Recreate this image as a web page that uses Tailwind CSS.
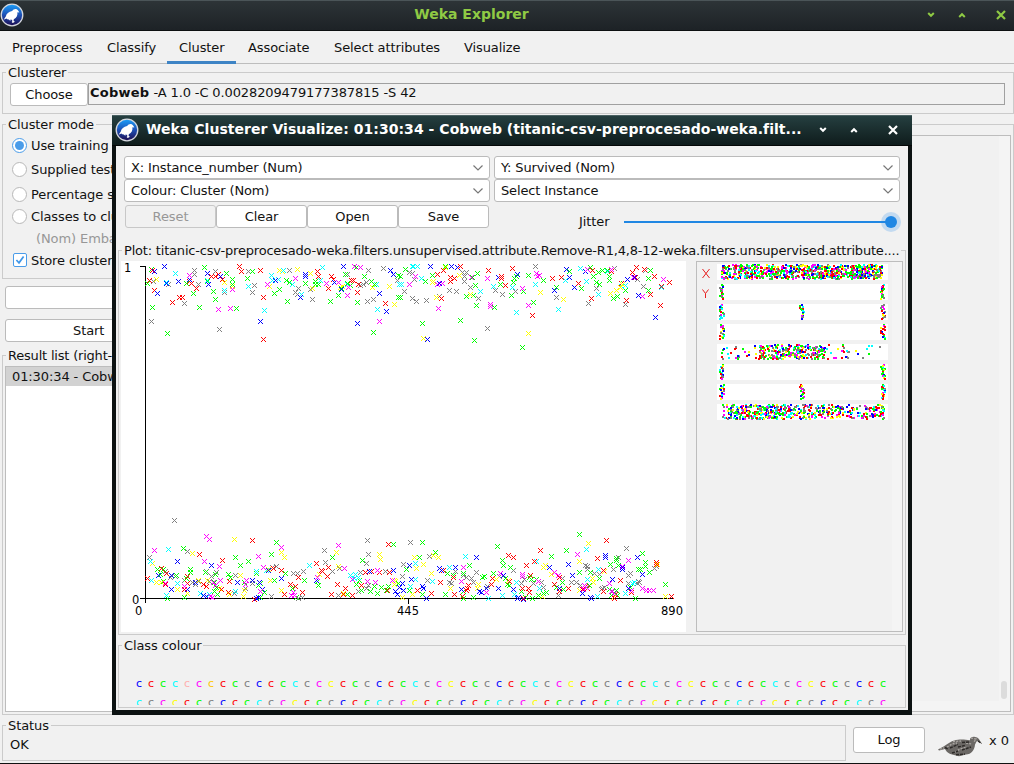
<!DOCTYPE html>
<html lang="en">
<head>
<meta charset="utf-8">
<title>Weka Explorer</title>
<script src="https://cdn.jsdelivr.net/npm/@tailwindcss/browser@4"></script>
</head>
<body class="w-[1014px] h-[764px] overflow-hidden bg-[#f1f1f1] font-['DejaVu_Sans',sans-serif] text-[13px] leading-4 tracking-[-0.1px] text-[#111] whitespace-nowrap">
<svg width="0" height="0" class="absolute">
  <defs>
    <linearGradient id="blue" x1="0" y1="0" x2="0" y2="1"><stop offset="0" stop-color="#1ba0fb"/><stop offset=".5" stop-color="#1d4fb4"/><stop offset="1" stop-color="#1c0b50"/></linearGradient>
    <symbol id="logo" viewBox="0 0 24 24">
      <circle cx="12" cy="12" r="10.8" fill="url(#blue)" stroke="#d5d8de" stroke-width="1.3"/>
      <path d="M3.6 16.8 L5.8 13.6 C6.3 10.6 8.8 8.8 12.1 8.1 C13.2 6.2 15.4 5.4 17 6.4 C18 7 18.7 8 19.3 9.5 L17.4 9.2 C17.8 12.4 16.6 15 13.8 16.2 L13.6 18 L15 18.8 L12.8 20 L11.6 18.9 L12.4 18.3 L12 16.7 L10 16.8 L10.8 18.2 L8.8 16.6 C7.6 16.4 6.8 16 6.4 15.5 Z" fill="#fff"/>
    </symbol>
    <symbol id="chev" viewBox="0 0 12 8"><path d="M1.5 1.5 L6 6 L10.5 1.5" fill="none" stroke="#777" stroke-width="1.2"/></symbol>
    <symbol id="down" viewBox="0 0 8 6"><path d="M1.2 1 L4 3.8 L6.8 1" fill="none" stroke="currentColor" stroke-width="2"/></symbol>
    <symbol id="up" viewBox="0 0 8 6"><path d="M1.2 5 L4 2.2 L6.8 5" fill="none" stroke="currentColor" stroke-width="2"/></symbol>
    <symbol id="close" viewBox="0 0 10 10"><path d="M1 1 L9 9 M9 1 L1 9" fill="none" stroke="currentColor" stroke-width="2.2"/></symbol>
  </defs>
</svg>

<div class="flex flex-col w-[1014px] h-[764px] border-b border-[#111]">
  <!-- main title bar -->
  <header class="h-[31px] shrink-0 flex items-center bg-gradient-to-b from-[#2d3437] to-[#1d2226] border-t border-t-[#4b5558] border-b border-b-[#0d1011] text-[#8fca44]">
    <svg class="w-6 h-6 shrink-0 -ml-[0.5px] -mt-px"><use href="#logo"/></svg>
    <h1 class="w-[896px] text-center font-bold text-[14px] tracking-normal -mt-[3px]">Weka Explorer</h1>
    <div class="flex items-center ml-[7px] -mt-px">
      <svg class="w-2 h-[6px]"><use href="#down"/></svg>
      <svg class="w-2 h-[6px] ml-[23px]"><use href="#up"/></svg>
      <svg class="w-[10px] h-[10px] ml-[30px]"><use href="#close"/></svg>
    </div>
  </header>

  <!-- tabs -->
  <nav class="h-[33px] shrink-0 flex border-b border-[#bdbdbd] pt-[9px]">
    <span class="w-[95px] pl-3 tracking-normal">Preprocess</span>
    <span class="w-[60px] pl-3">Classify</span>
    <span class="w-[12px]"></span>
    <span class="w-[69px] h-[24px] pl-3 border-b-[3px] border-[#3e84c5]">Cluster</span>
    <span class="w-[85px] pl-3">Associate</span>
    <span class="w-[132px] pl-[13px]">Select attributes</span>
    <span class="pl-[11px]">Visualize</span>
  </nav>

  <!-- clusterer -->
  <section class="mt-2 ml-[2px] h-[42px] shrink-0 border border-[#cbcbcb]">
    <div class="w-fit -mt-2 ml-[3px] px-[2px] h-4 bg-[#f1f1f1]">Clusterer</div>
    <div class="flex ml-[7px] mt-[2px] mr-2">
      <button class="w-[78px] h-[23px] border border-[#bbb] rounded-[3px] bg-white">Choose</button>
      <div class="flex-1 h-[22px] border border-[#a0a0a0] pl-[1px] pt-[1px]"><b class="tracking-[0.25px]">Cobweb</b><span class="tracking-[-0.12px]"> -A 1.0 -C 0.0028209479177387815 -S 42</span></div>
    </div>
  </section>

  <div class="flex mt-[10px] h-[591px] shrink-0">
    <!-- left column -->
    <div class="w-[200px] flex flex-col">
      <section class="ml-[2px] h-[155px] shrink-0 border border-[#cbcbcb]">
        <div class="w-fit -mt-2 ml-[3px] px-[2px] h-4 bg-[#f1f1f1]">Cluster mode</div>
        <div class="ml-[9px] flex items-start gap-1 mt-[5px] h-4"><span class="w-[15px] h-[15px] rounded-full border border-[#4a9ce9] bg-white flex items-center justify-center"><span class="w-[9px] h-[9px] rounded-full bg-[#4a9ce9]"></span></span>Use training set</div>
        <div class="ml-[9px] flex items-start gap-1 mt-2 h-4"><span class="w-[15px] h-[15px] rounded-full border border-[#b8b8b8] bg-white"></span>Supplied test set</div>
        <div class="ml-[9px] flex items-start gap-1 mt-[9px] h-4"><span class="w-[15px] h-[15px] rounded-full border border-[#b8b8b8] bg-white"></span>Percentage split</div>
        <div class="ml-[9px] flex items-start gap-1 mt-[6px] h-4"><span class="w-[15px] h-[15px] rounded-full border border-[#b8b8b8] bg-white"></span>Classes to clusters</div>
        <div class="ml-[33px] mt-[6px] h-4 text-[#979797]">(Nom) Embarked</div>
        <div class="ml-[10px] flex items-start gap-1 mt-[6px] h-4"><svg width="14" height="14" viewBox="0 0 14 14"><rect x=".5" y=".5" width="13" height="13" rx="1.5" fill="#fff" stroke="#4a9ce9"/><path d="M3.4 7 L6 9.8 L10.6 3.4" fill="none" stroke="#3f96e8" stroke-width="1.7"/></svg><span>Store clusters</span></div>
      </section>
      <button class="ml-[5px] mt-[7px] h-[23px] shrink-0 border border-[#bbb] rounded-[3px] bg-white"></button>
      <button class="ml-[5px] mt-[10px] h-[23px] shrink-0 border border-[#bbb] rounded-[3px] bg-white text-left pl-[67px]">Start</button>
      <section class="ml-[2px] mt-[13px] flex-1 border border-[#cbcbcb]">
        <div class="w-fit -mt-2 ml-[3px] px-[2px] h-4 bg-[#f1f1f1] tracking-[-0.2px]">Result list (right-click for options)</div>
        <div class="ml-[2px] mt-[2px] h-[346px] border border-[#bdbdbd] bg-white"><div class="h-[19px] pt-[2px] pl-[6px] bg-[#d2d2d2] overflow-hidden">01:30:34 - Cobweb</div></div>
      </section>
    </div>
    <!-- output -->
    <section class="ml-[10px] flex-1 border border-[#cbcbcb] pt-[10px] pr-[2px] pb-[2px]">
      <div class="h-full flex border border-[#bdbdbd]">
        <div class="flex-1 border-b-[10px] border-[#f4f4f4]"></div>
        <div class="w-[11px] h-full flex items-end bg-[#f4f4f4] pb-[12px] pl-[2px]"><div class="w-[6px] h-[18px] rounded-full bg-[#dcdcdc]"></div></div>
      </div>
    </section>
  </div>

  <!-- status -->
  <footer class="mt-[10px] flex h-[37px] shrink-0">
    <section class="w-[844px] h-[36px] ml-[2px] border border-[#cbcbcb]">
      <div class="w-fit -mt-2 ml-[3px] px-[2px] h-4 bg-[#f1f1f1]">Status</div>
      <div class="ml-[7px] mt-[3px]">OK</div>
    </section>
    <button class="ml-[7px] mt-[2px] w-[72px] h-[26px] border border-[#bbb] rounded-[3px] bg-white">Log</button>
    <svg class="ml-[13px] mt-[11px]" width="45" height="21" viewBox="0 0 45 21">
      <path d="M0 13.5 L6 10.3 C10 7.8 14 4.3 20 3.8 C25 3 29 4.3 32 4.2 C31.5 2 34 .4 37 .9 C41 1.2 42 4.7 44 8 L39.4 5 C38 5.3 38 7.5 37 8.5 C36.7 14 33.2 18.2 28 18.6 L21 20.3 L15 18.8 C10 17.6 8 15 7 13 L1 14.4 Z" fill="#6b6865"/>
      <path d="M9 11 L14 8 L19 7 M17 16 L22 13 L29 11 M28 7 L34 8 M15 5.5 L23 5 M33 2 L38 3 L36 6 M2 13 L6 12" fill="none" stroke="#aaa6a2" stroke-width="1.3" stroke-dasharray="2 1.2"/>
      <path d="M12 12 L20 8.5 M14 17 L20 15 M24 14 L33 11 M24 6.5 L31 6 M18 18.8 L27 18 M20 11 L27 9.5 M7 11.5 L10 13 M40 5 L43.500 7.500" fill="none" stroke="#2c2927" stroke-width="1.4" stroke-dasharray="3 1"/>
    </svg>
    <span class="ml-[6px] mt-[8px]">x 0</span>
  </footer>
</div>

<!-- visualize window -->
<div class="absolute left-[112px] top-[115px] w-[800px] h-[600px] flex flex-col bg-[#0c1212]">
  <header class="h-[31px] shrink-0 flex items-center bg-gradient-to-b from-[#253f40] to-[#0f1c1c] border-t border-t-[#4b6263] border-b border-b-[#050808] text-white">
    <svg class="w-6 h-6 shrink-0 ml-[3px] -mt-px"><use href="#logo"/></svg>
    <h2 class="ml-[7px] w-[656px] shrink-0 font-bold text-[14px] tracking-[0.04px] -mt-[3px]">Weka Clusterer Visualize: 01:30:34 - Cobweb (titanic-csv-preprocesado-weka.filt...</h2>
    <div class="flex items-center ml-[16.5px] -mt-px">
      <svg class="w-2 h-[6px]"><use href="#down"/></svg>
      <svg class="w-2 h-[6px] ml-[23px]"><use href="#up"/></svg>
      <svg class="w-[10px] h-[10px] ml-[30px]"><use href="#close"/></svg>
    </div>
  </header>
  <div class="mx-1 h-[564px] bg-[#f1f1f1] flex flex-col">
    <div class="grid grid-cols-[366px_406px] gap-x-1 mt-[10px] ml-2 tracking-[-0.14px]">
      <div class="h-[23px] flex items-center justify-between border border-[#bbb] rounded-[3px] bg-white pl-[6px] pr-[5px]">X: Instance_number (Num)<svg class="w-3 h-2"><use href="#chev"/></svg></div>
      <div class="h-[23px] flex items-center justify-between border border-[#bbb] rounded-[3px] bg-white pl-[6px] pr-[5px]">Y: Survived (Nom)<svg class="w-3 h-2"><use href="#chev"/></svg></div>
      <div class="h-[23px] flex items-center justify-between border border-[#bbb] rounded-[3px] bg-white pl-[6px] pr-[5px]">Colour: Cluster (Nom)<svg class="w-3 h-2"><use href="#chev"/></svg></div>
      <div class="h-[23px] flex items-center justify-between border border-[#bbb] rounded-[3px] bg-white pl-[6px] pr-[5px]">Select Instance<svg class="w-3 h-2"><use href="#chev"/></svg></div>
    </div>
    <div class="flex ml-[9px] mt-[3px] h-[27px]">
      <button class="w-[91px] h-[23px] border border-[#c8c8c8] rounded-[3px] text-[#979797]">Reset</button>
      <button class="w-[91px] h-[23px] border border-[#bbb] rounded-[3px] bg-white">Clear</button>
      <button class="w-[91px] h-[23px] border border-[#bbb] rounded-[3px] bg-white">Open</button>
      <button class="w-[91px] h-[23px] border border-[#bbb] rounded-[3px] bg-white">Save</button>
      <span class="ml-[90px] mt-[9px] w-[45px]">Jitter</span>
      <svg class="mt-[6px]" width="280" height="22" viewBox="0 0 280 22"><circle cx="267" cy="11" r="10" fill="#c3daf0"/><rect x="0" y="10" width="266" height="2" fill="#2087e3"/><circle cx="267" cy="11" r="6" fill="#2087e3"/></svg>
    </div>
    <section class="ml-[2px] mr-[2px] mt-[18px] w-[788px] h-[385px] shrink-0 border border-[#cbcbcb]">
      <div class="w-fit -mt-2 ml-[3px] px-[2px] h-4 bg-[#f1f1f1] tracking-[-0.192px]">Plot: titanic-csv-preprocesado-weka.filters.unsupervised.attribute.Remove-R1,4,8-12-weka.filters.unsupervised.attribute....</div>
      <div class="flex mt-[2px]">
        <svg id="plot" class="ml-[2px] bg-white tracking-normal" width="565" height="371" viewBox="121 261 565 371" shape-rendering="crispEdges">
          <path d="M145.500 266V603M140 266.500H146M140 598.500H673M408.500 598V604M671.500 598V599" stroke="#000" fill="none"/>
          <g fill="#000" font-size="11.5" font-family="DejaVu Sans, sans-serif" shape-rendering="auto">
            <text x="124" y="272">1</text><text x="132" y="604">0</text><text x="135" y="615">0</text><text x="397" y="615">445</text><text x="661" y="615">890</text>
          </g>
        </svg>
        <div class="ml-[10px] w-[207px] h-[371px] border border-[#bdbdbd] flex">
          <svg id="strips" width="195" height="369" viewBox="697 262 195 369" shape-rendering="crispEdges">
            <g stroke="#e82020" fill="none" shape-rendering="auto"><path d="M702.500 269 L709.500 278 M709.500 269 L702.500 278 M702.500 289.500 L705.500 293.500 L708.500 289.500 M705.500 293.500 V298"/></g>
          </svg>
          <div class="flex-1 bg-[#f4f4f4]"></div>
        </div>
      </div>
    </section>
    <section class="ml-[2px] mt-[10px] w-[788px] h-[63px] shrink-0 border border-[#cbcbcb]">
      <div class="w-fit -mt-2 ml-[3px] px-[2px] h-4 bg-[#f1f1f1]">Class colour</div>
      <div id="classes" class="ml-[17px] mt-[23px] h-[28px] overflow-hidden grid grid-cols-[repeat(63,12px)] auto-rows-[19px] text-[11px] leading-[14px]"></div>
    </section>
  </div>
</div>

<script>
const C = {b:'#0000ff', r:'#ff0000', g:'#00ff00', c:'#00ffff', k:'#808080', m:'#ff00ff', y:'#ffff00'};
// point groups: origin, then x,y pairs per colour in third-pixel units
const groups = [
 [115,255,{
  k:'238,46 238,58 160,88 115,79 208,145 109,199 250,88 301,49 328,112 313,223 400,49 418,91 412,112 523,46 550,100 541,112 592,133 586,103 547,118 697,58 760,46 805,40 754,82 745,88 736,91 757,139 775,133 847,76 868,109 892,130',
  y:'124,73 328,82 352,94 463,94 493,46 502,49 547,43 586,55 592,100 682,94 676,97 772,97 823,94 838,148',
  c:'181,55 154,82 278,76 328,106 400,94 448,166 469,61 472,76 490,73 505,46 532,88 559,118 622,37 616,76 697,88 784,88 787,163 853,88 892,34',
  g:'109,43 97,85 112,157 157,235 268,37 235,115 214,85 253,157 278,79 295,109 301,133 334,55 352,73 352,88 364,160 397,70 412,49 478,115 493,103 514,76 523,82 517,139 571,85 601,79 610,88 600,88 646,139 670,121 680,100 691,58 697,85 706,91 724,37 748,64 769,79 778,88 727,142 850,127 775,232 850,61 871,43',
  r:'112,46 103,76 118,106 172,142 193,127 202,127 223,79 229,85 244,100 289,64 301,64 310,58 322,73 373,34 379,49 436,46 445,127 445,253 607,49 610,64 640,100 649,64 655,73 709,76 714,76 730,88 727,112 811,145',
  b:'148,34 118,49 153,85 190,79 127,115 277,55 316,64 280,88 223,72 571,58 571,64 481,76 556,127 436,199 657,82 685,34 680,103 826,46 835,58 793,115 814,169 727,205',
  m:'223,61 310,163 346,160 352,103 457,88 541,70 634,85 670,82 700,97 697,121 718,34 736,37 793,199 883,88'}],
 [400,255,{
  k:'28,52 37,55 43,73 13,109 37,130 49,139 79,136 148,106 169,109 118,124 187,52 199,52 193,64 193,79 211,97 235,130 262,220 286,106 307,118 346,109 406,34 469,127 565,145 589,100 643,40 676,148 730,94 736,46 712,73',
  g:'16,43 0,64 97,61 76,79 136,34 0,127 67,205 181,196 223,256 232,55 217,67 226,91 199,124 220,121 229,151 283,157 301,88 343,70 349,64 340,82 334,121 370,109 385,61 400,142 430,76 367,277 469,97 508,49 544,100 571,37 580,64 589,82 598,88 607,46 595,52 622,46 628,64 628,76 652,124 640,130 670,85 676,106 745,70 751,46 745,106',
  c:'40,34 52,34 64,70 4,88 280,94 241,109 337,97 349,172 406,88 475,163 496,76 541,40 559,79 595,118 622,49 664,94 676,91 784,97',
  b:'91,34 154,34 172,37 118,85 82,253 295,67 352,58 463,106 499,43 508,67 523,97 556,49 682,73 703,67 715,121 766,187',
  r:'181,34 130,46 112,58 151,67 163,70 151,79 124,130 265,46 305,64 305,70 316,91 337,40 397,181 457,70 484,67 535,85 574,130 577,46 634,49 664,85 679,136 709,37 697,52 706,67 734,43 763,64 784,94 751,118 781,151 808,82',
  m:'46,64 28,88 115,160 112,88 127,85 262,70 214,67 271,148 271,154 367,100 385,151 409,55 412,64 418,61 562,43 634,43 727,124 790,73 700,67',
  y:'136,37 178,61 97,82 100,79 109,127 70,250 211,118 385,235 421,112 490,133 631,115 649,106 667,88 661,97'}],
 [115,510,{
  k:'178,31 103,142 217,124 151,184 166,202 181,199 136,193 208,211 232,217 241,223 250,214 274,184 304,187 289,199 283,214 361,196 358,250 391,235 412,220 469,259 484,169 472,172 535,190 547,190 565,184 550,265 562,262 628,121 631,157 673,175 652,184 670,256 757,91 760,133 754,160 736,187 730,244 754,235 811,184 760,226 865,163',
  y:'232,130 112,160 124,217 139,217 187,238 217,250 250,211 277,211 313,235 358,88 376,196 385,259 388,241 343,253 466,211 460,178 499,127 508,142 499,241 613,193 664,127 670,169 685,250 793,133 796,148 838,211 838,223 841,214',
  g:'205,115 127,178 145,178 136,193 145,214 157,265 208,262 184,196 226,178 214,205 226,187 271,187 301,193 298,217 304,232 298,244 306,253 340,193 346,202 361,142 376,166 400,154 388,217 424,190 436,220 430,226 448,247 469,133 484,97 511,190 478,211 436,262 532,235 544,262 568,211 607,214 610,226 652,142 697,253 724,223 733,211 742,151 739,241 835,103 778,229 799,232 814,241 820,229 787,250 766,244 850,220',
  c:'160,118 106,154 109,211 187,220 154,256 256,250 361,244 424,184 454,181 583,166 283,253 706,196 721,193 730,202 718,205',
  r:'97,205 139,175 154,190 151,223 217,199 217,220 208,238 253,133 265,223 274,229 322,151 343,214 340,247 319,238 412,91 418,268 499,181 475,175 526,223 541,229 550,202 508,253 562,247 604,160 619,181 622,184 640,172 637,199 667,223 691,235 649,253 712,256 685,253 751,187 769,184 793,187 820,103 823,187 817,241 739,226',
  b:'187,154 289,166 130,196 169,196 169,238 241,217 217,238 265,256 274,259 367,217 412,211 434,217 442,238 424,265 430,262 499,205 460,181 604,211 763,184 835,181 841,244 847,253 853,232',
  m:'118,121 274,79 283,88 268,154 313,169 316,211 295,217 301,226 292,262 286,259 208,229 151,220 394,211 391,223 430,139 445,172 499,112 436,244 529,256 538,256 535,247 607,202 670,106 688,175 712,208 757,214 781,217 787,181 832,211'}],
 [400,510,{
  k:'31,97 10,163 88,139 82,211 148,217 154,220 190,196 199,202 166,184 229,187 214,205 220,217 340,181 298,199 262,229 373,208 364,220 424,217 430,232 400,220 475,256 487,205 514,217 529,217 541,226 556,166 562,169 562,178 583,190 598,193 607,235 604,238 613,232 679,115 655,142 640,178 685,196 691,190 715,214 718,217 712,220 763,175 769,169 685,220 637,244 52,241 7,199',
  y:'43,142 100,136 115,142 70,163 49,175 94,190 151,235 235,223 232,235 289,208 325,211 430,172 436,166 454,193 427,259 538,154 565,100 577,205 580,217 538,241 613,184 640,262 772,163 796,259 37,253 7,262',
  g:'67,97 58,142 106,127 19,178 142,190 160,196 208,166 190,190 136,253 190,265 190,244 220,262 247,202 253,199 292,109 307,151 310,166 331,172 280,190 316,205 322,223 328,226 364,244 376,262 397,265 388,202 394,208 409,208 454,139 499,121 430,250 439,247 487,217 490,238 538,73 538,187 469,232 571,187 568,226 598,205 631,163 649,145 649,151 655,166 628,238 649,241 634,256 727,130 736,157 736,169 748,187 715,178 721,178 691,232 706,265 796,223 652,256 415,256 28,241 67,253',
  c:'196,139 148,172 46,160 46,208 97,214 265,265 307,256 349,217 343,253 409,154 418,235 559,118 562,208 595,178 592,259 667,172 676,250 697,220 703,217 31,229',
  r:'130,181 121,217 94,250 160,202 205,226 202,235 199,241 163,253 187,259 277,205 274,223 325,136 340,142 379,166 328,214 391,196 385,235 367,235 388,247 370,265 404,154 421,121 463,223 478,202 478,244 505,235 547,238 556,229 562,235 592,145 610,181 619,91 610,244 646,253 661,211 643,265 694,247 769,157 769,163 814,259 52,241',
  b:'28,166 7,220 34,208 67,229 70,235 79,265 118,175 124,181 166,172 184,238 229,142 238,244 244,247 259,235 295,235 310,196 340,238 352,265 355,262 370,268 448,172 505,163 517,196 478,235 547,250 571,262 574,265 616,136 616,142 667,172 667,178 712,142 637,208 727,193 685,235 10,241',
  m:'190,172 184,214 259,247 301,190 367,193 367,199 415,214 463,187 475,196 532,133 553,226 559,232 550,238 685,151 667,169 628,220 634,244 643,250 727,235 739,241 748,241 760,241 694,241'}]
];
const NS = 'http://www.w3.org/2000/svg';
const add = (svg, d, fill) => { const p = document.createElementNS(NS, 'path'); p.setAttribute('d', d); p.setAttribute('fill', fill); svg.appendChild(p); };
const plot = document.getElementById('plot');
const dot = (x, y) => `M${x} ${y}h1v1h-1z`;
for (const [ox, oy, set] of groups) for (const key in set) {
  let d = '';
  for (const pair of set[key].split(' ')) {
    const [a, b] = pair.split(',').map(Number), x = ox + Math.floor(a / 3), y = oy + Math.floor(b / 3);
    d += dot(x, y);
    for (const k of [1, 2]) d += dot(x - k, y - k) + dot(x + k, y - k) + dot(x - k, y + k) + dot(x + k, y + k);
  }
  add(plot, d, C[key]);
}

// attribute strips
let seed = 7;
const rnd = () => (seed = (seed * 16807) % 2147483647) / 2147483647;
const pal = 'rgbkgcrmykgrbcymkg'.split('');
const strips = document.getElementById('strips');
const put = (x, y) => add(strips, `M${Math.round(x)} ${Math.round(y)}h2v2h-2z`, C[pal[Math.floor(rnd() * pal.length)]]);
for (let s = 0; s < 8; s++) {
  const y0 = 264 + s * 20;
  add(strips, `M717 ${y0}h171v16h-171z`, '#fff');
  const yy = () => y0 + rnd() * 14;
  if (s === 0) for (let i = 0; i < 820; i++) put(721 + rnd() * 161, yy());
  else if (s === 7) for (let i = 0; i < 560; i++) { const t = rnd(); put(722 + (i % 6 ? t * 161 : 10 + t * 45), yy()); }
  else if (s === 4) for (let i = 0; i < 330; i++) put(i % 3 ? 758 + rnd() * 66 : 720 + rnd() * (i % 2 ? 128 : 162), yy());
  else {
    const cols = s === 2 || s === 6 ? [719, 799, 880] : [719, 880];
    for (const cx of cols) for (let i = 0; i < 17; i++) put(cx + rnd() * 4, y0 + (i / 16) * 14);
  }
}

// class legend
const cyc = 'brgckmyrgk', box = document.getElementById('classes');
for (let i = 0; i < 126; i++) {
  const e = document.createElement('span');
  e.textContent = 'c';
  e.style.color = i === 4 ? '#ffafaf' : i === 6 ? '#ffc800' : C[cyc[i % 10]];
  box.appendChild(e);
}
</script>
</body>
</html>
